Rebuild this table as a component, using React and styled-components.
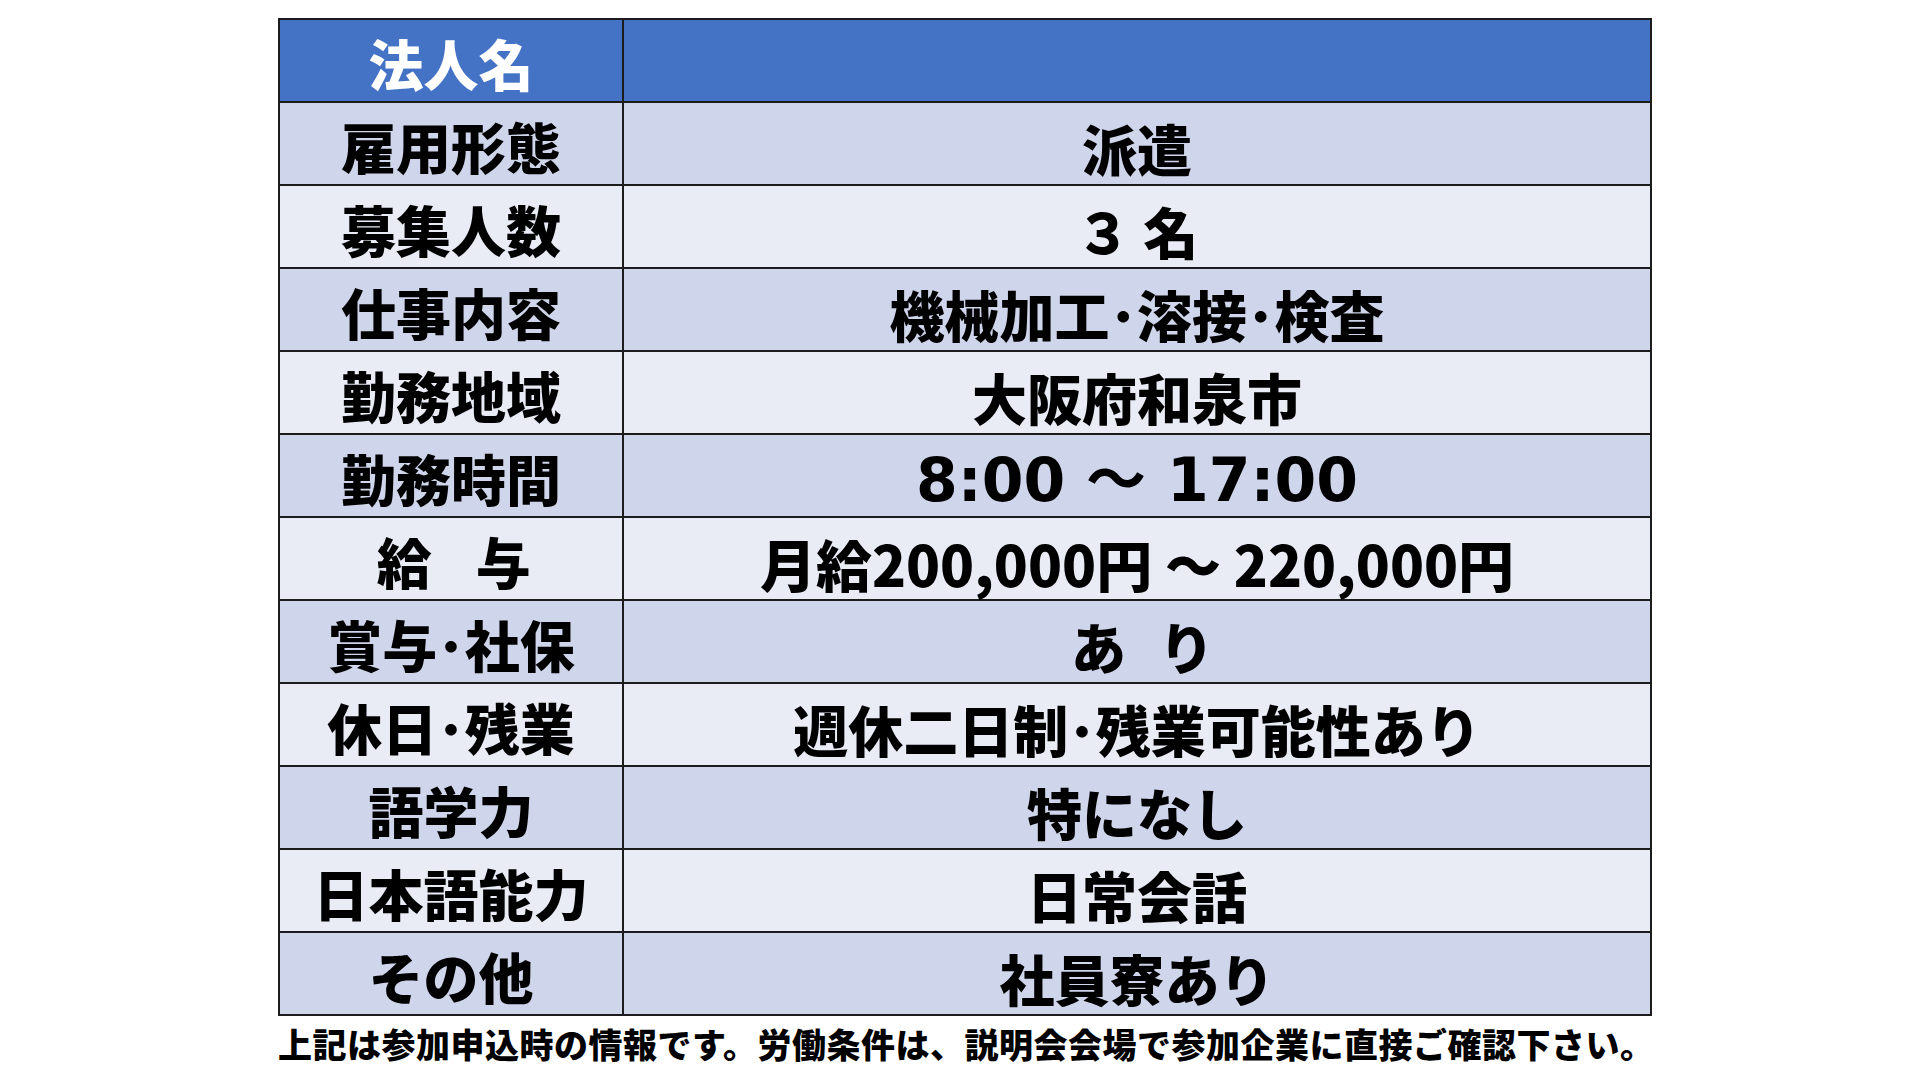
import React from 'react';
import styled, { createGlobalStyle } from 'styled-components';

const rows = [
  { label: '雇用形態', value: '派遣' },
  { label: '募集人数', value: '３ 名' },
  { label: '仕事内容', value: '機械加工･溶接･検査' },
  { label: '勤務地域', value: '大阪府和泉市' },
  { label: '勤務時間', value: '8:00 ～ 17:00', kind: 'latin' },
  { label: '給　与', value: '月給200,000円 ～ 220,000円', kind: 'wide', tightLabel: true },
  { label: '賞与･社保', value: 'あ　り', kind: 'tight' },
  { label: '休日･残業', value: '週休二日制･残業可能性あり' },
  { label: '語学力', value: '特になし' },
  { label: '日本語能力', value: '日常会話' },
  { label: 'その他', value: '社員寮あり' },
];

const App = () => {
  return (
    <>
      <GlobalStyle />
      <Page>
        <Table>
          <tbody>
            <HeaderRow>
              <LabelCell header>法人名</LabelCell>
              <ValueCell />
            </HeaderRow>
            {rows.map((row, i) => (
              <Row key={i} shade={i % 2 === 0 ? 'dark' : 'light'}>
                <LabelCell tight={row.tightLabel}>{row.label}</LabelCell>
                <ValueCell kind={row.kind}>{row.value}</ValueCell>
              </Row>
            ))}
          </tbody>
        </Table>
        <Note>
          上記は参加申込時の情報です。労働条件は、説明会会場で参加企業に直接ご確認下さい。
        </Note>
      </Page>
    </>
  );
};

const GlobalStyle = createGlobalStyle`
  html, body {
    margin: 0;
    padding: 0;
    background: #ffffff;
  }
  body {
    font-family: 'Noto Sans CJK JP', 'Noto Sans', sans-serif;
  }
`;

const Page = styled.div`
  width: 1920px;
  height: 1080px;
  padding: 18px 0 0 278px;
  box-sizing: border-box;
`;

const Table = styled.table`
  width: 1374px;
  border-collapse: collapse;
  table-layout: fixed;
  border: 2px solid #1c1c1c;
`;

const HeaderRow = styled.tr`
  background: #4472c4;
`;

const Row = styled.tr`
  background: ${props => (props.shade === 'dark' ? '#cfd5ea' : '#e9ebf5')};
`;

const LabelCell = styled.td`
  width: 342px;
  height: 77px;
  padding: 4px 0 0 0;
  border: 2px solid #1c1c1c;
  text-align: center;
  vertical-align: middle;
  font-family: 'Noto Sans CJK JP', sans-serif;
  font-weight: 900;
  font-size: 55px;
  line-height: 1;
  white-space: nowrap;
  letter-spacing: ${props => (props.tight ? '-0.1em' : 'normal')};
  color: ${props => (props.header ? '#ffffff' : '#000000')};
`;

const fontSizes = { latin: '60px', wide: '56px' };

const ValueCell = styled.td`
  height: 73px;
  padding: 8px 0 0 0;
  border: 2px solid #1c1c1c;
  text-align: center;
  vertical-align: middle;
  font-family: ${props =>
    props.kind === 'latin'
      ? "'DejaVu Sans', 'Noto Sans CJK JP', sans-serif"
      : "'Noto Sans CJK JP', sans-serif"};
  font-weight: ${props => (props.kind === 'latin' ? 700 : 900)};
  font-size: ${props => fontSizes[props.kind] || '55px'};
  letter-spacing: ${props => (props.kind === 'tight' ? '-0.2em' : 'normal')};
  line-height: 1;
  white-space: nowrap;
  color: #000000;
`;

const Note = styled.div`
  margin-top: 8px;
  font-family: 'Noto Sans CJK JP', sans-serif;
  font-weight: 900;
  font-size: 34px;
  letter-spacing: 0.5px;
  line-height: 1.2;
  color: #000000;
  white-space: nowrap;
`;

export default App;
